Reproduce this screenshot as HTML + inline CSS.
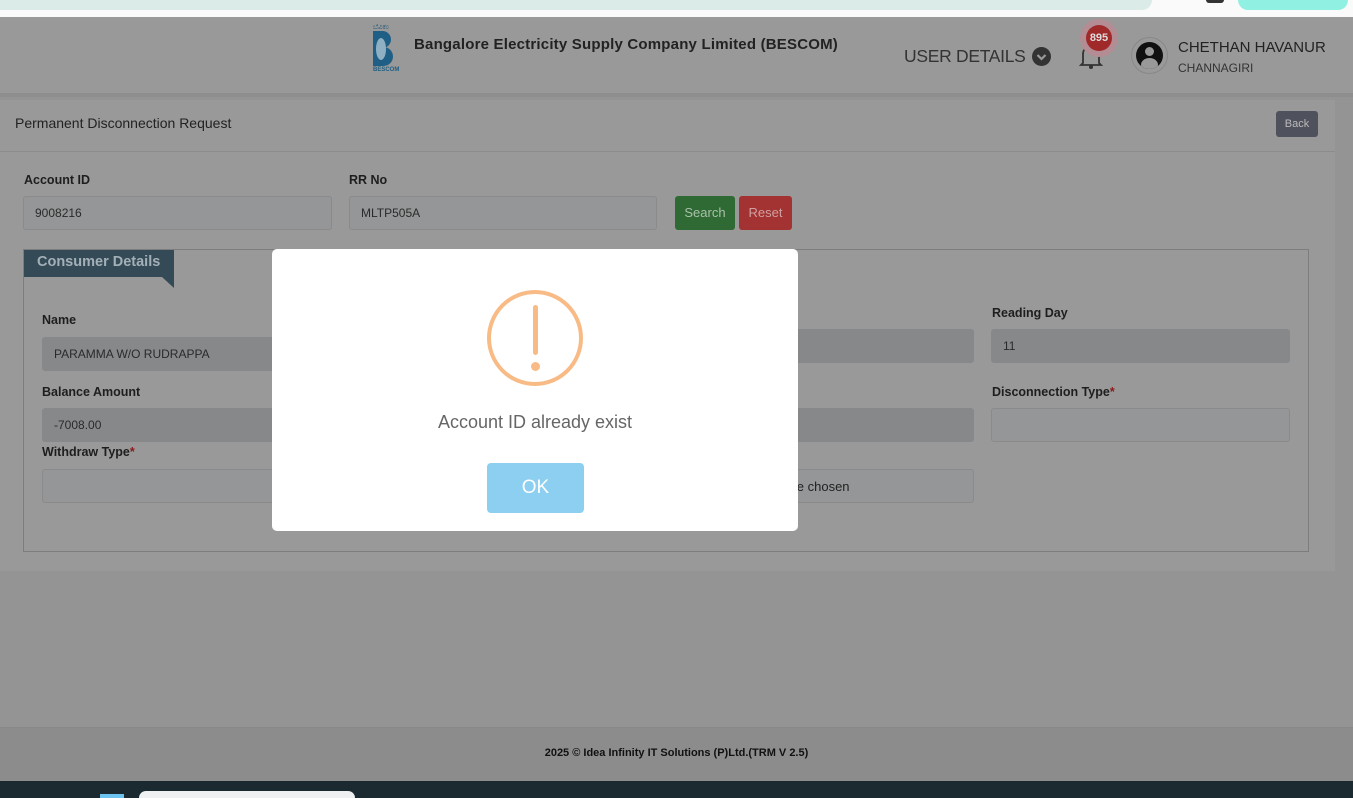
<!DOCTYPE html>
<html><head><meta charset="utf-8"><style>
*{box-sizing:border-box;margin:0;padding:0}
html,body{width:1353px;height:798px;overflow:hidden}
body{background:#949494;font-family:"Liberation Sans",sans-serif;position:relative;font-size:13px;color:#1a1a1a}
.a{position:absolute}
.lbl{position:absolute;font-size:12.5px;color:#1e1e1e;font-weight:bold}
.inp{position:absolute;border:1px solid #8a8a8a;border-radius:3px;background:#959697;font-size:12px;color:#2a2a2a;padding-left:11px;display:flex;align-items:center}
.dis{background:#87888a;border-color:#87888a}
</style></head><body>
<div class="a" style="left:0;top:0;width:1353px;height:17px;background:#fafafa"></div>
<div class="a" style="left:0;top:0;width:1152px;height:10px;background:#dbece8;border-radius:0 0 12px 0"></div>
<div class="a" style="left:1238px;top:0;width:110px;height:10px;background:#90f0e2;border-radius:0 0 10px 10px"></div>
<div class="a" style="left:1206px;top:0;width:18px;height:3px;background:#333;border-radius:0 0 9px 9px"></div>
<div class="a" style="left:0;top:17px;width:1353px;height:78px;background:#999"></div>
<div class="a" style="left:0;top:93px;width:1353px;height:4px;background:#8e8e8e"></div>
<!-- logo -->
<div class="a" style="left:373px;top:24px;font-size:7px;color:#235a78">ಬೆವಿಕಂ</div>
<div class="a" style="left:373px;top:31px;width:8px;height:35px;background:#1f5f85"></div>
<div class="a" style="left:378px;top:31px;width:13px;height:17px;background:#1f5f85;border-radius:0 9px 9px 0"></div>
<div class="a" style="left:378px;top:47px;width:15px;height:19px;background:#1f5f85;border-radius:0 10px 10px 0"></div>
<div class="a" style="left:376px;top:38px;width:10px;height:22px;border-radius:50%;background:#8fb0c2"></div>
<div class="a" style="left:373px;top:67px;font-size:6px;color:#1f5f85;font-weight:bold">BESCOM</div>
<div class="a" style="left:414px;top:36px;font-size:15px;font-weight:bold;color:#222;letter-spacing:0.2px">Bangalore Electricity Supply Company Limited (BESCOM)</div>
<div class="a" style="left:904px;top:46px;font-size:17.5px;color:#333;letter-spacing:-0.3px">USER DETAILS</div>
<div class="a" style="left:1032px;top:47px;width:19px;height:19px;border-radius:50%;background:#333"></div>
<svg class="a" style="left:1032px;top:47px" width="19" height="19"><path d="M5.5 8l4 4 4-4" fill="none" stroke="#999" stroke-width="2.2"/></svg>
<svg class="a" style="left:1078px;top:42px" width="26" height="28" viewBox="0 0 26 28"><path d="M5 21V12a8 8 0 0 1 16 0v9l2 2H3z" fill="none" stroke="#333" stroke-width="1.8"/><circle cx="13" cy="25" r="2" fill="#333"/></svg>
<div class="a" style="left:1080px;top:19px;width:38px;height:38px;border-radius:50%;background:#b48c93"></div>
<div class="a" style="left:1086px;top:25px;width:26px;height:26px;border-radius:50%;background:#a0292a;color:#ddd;font-size:11px;font-weight:bold;text-align:center;line-height:26px">895</div>
<div class="a" style="left:1131px;top:37px;width:37px;height:37px;border-radius:50%;border:1px solid #888;background:#999"></div>
<div class="a" style="left:1136px;top:42px;width:27px;height:27px;border-radius:50%;background:#111;overflow:hidden"><div style="position:absolute;left:9px;top:5px;width:9px;height:9px;border-radius:50%;background:#999"></div><div style="position:absolute;left:5px;top:16px;width:17px;height:14px;border-radius:50%;background:#999"></div></div>
<div class="a" style="left:1178px;top:39px;font-size:15px;color:#222">CHETHAN HAVANUR</div>
<div class="a" style="left:1178px;top:61px;font-size:12px;color:#333">CHANNAGIRI</div>
<!-- card -->
<div class="a" style="left:0;top:100px;width:1335px;height:471px;background:#999"></div>
<div class="a" style="left:0;top:151px;width:1335px;height:1px;background:#8c8c8c"></div>
<div class="a" style="left:15px;top:115px;font-size:14px;color:#222">Permanent Disconnection Request</div>
<div class="a" style="left:1276px;top:111px;width:42px;height:26px;background:#4f525c;border-radius:3px;color:#bbb;font-size:11px;text-align:center;line-height:26px">Back</div>
<div class="lbl" style="left:24px;top:173px">Account ID</div>
<div class="inp" style="left:23px;top:196px;width:309px;height:34px">9008216</div>
<div class="lbl" style="left:349px;top:173px">RR No</div>
<div class="inp" style="left:349px;top:196px;width:308px;height:34px">MLTP505A</div>
<div class="a" style="left:675px;top:196px;width:60px;height:34px;background:#2f6a34;border-radius:3px;color:#aac0aa;font-size:13px;text-align:center;line-height:34px">Search</div>
<div class="a" style="left:739px;top:196px;width:53px;height:34px;background:#a33232;border-radius:3px;color:#d0a0a0;font-size:13px;text-align:center;line-height:34px">Reset</div>
<div class="a" style="left:23px;top:249px;width:1286px;height:303px;border:1px solid #7d7d7d"></div>
<div class="a" style="left:24px;top:250px;width:150px;height:27px;background:#354a57;color:#a4b0b8;font-size:14.5px;font-weight:bold;padding:4px 0 0 13px">Consumer Details</div>
<div class="a" style="left:162px;top:277px;width:0;height:0;border-top:11px solid #354a57;border-left:12px solid transparent"></div>
<div class="lbl" style="left:42px;top:313px">Name</div>
<div class="inp dis" style="left:42px;top:337px;width:240px;height:34px">PARAMMA W/O RUDRAPPA</div>
<div class="lbl" style="left:42px;top:385px">Balance Amount</div>
<div class="inp dis" style="left:42px;top:408px;width:240px;height:34px">-7008.00</div>
<div class="lbl" style="left:42px;top:445px">Withdraw Type<span style="color:#8b1a1a">*</span></div>
<div class="inp" style="left:42px;top:469px;width:240px;height:34px"></div>
<div class="inp dis" style="left:790px;top:329px;width:184px;height:34px"></div>
<div class="lbl" style="left:992px;top:306px">Reading Day</div>
<div class="inp dis" style="left:991px;top:329px;width:299px;height:34px">11</div>
<div class="inp dis" style="left:790px;top:408px;width:184px;height:34px"></div>
<div class="lbl" style="left:992px;top:385px">Disconnection Type<span style="color:#8b1a1a">*</span></div>
<div class="inp" style="left:991px;top:408px;width:299px;height:34px"></div>
<div class="inp" style="left:790px;top:469px;width:184px;height:34px;padding-left:0;font-size:13px;color:#222">ile chosen</div>
<!-- footer -->
<div class="a" style="left:0;top:727px;width:1353px;height:54px;background:#8c8c8c;border-top:1px solid #888"></div>
<div class="a" style="left:0;top:747px;width:1353px;text-align:center;font-size:11px;font-weight:bold;color:#111">2025 © Idea Infinity IT Solutions (P)Ltd.(TRM V 2.5)</div>
<div class="a" style="left:0;top:781px;width:1353px;height:17px;background:#1b2a31"></div>
<div class="a" style="left:139px;top:791px;width:216px;height:7px;background:#eef0f1;border-radius:8px 8px 0 0"></div>
<div class="a" style="left:100px;top:794px;width:24px;height:4px;background:#6cc3ef"></div>
<!-- modal -->
<div class="a" style="left:272px;top:249px;width:526px;height:282px;background:#fff;border-radius:5px"></div>
<div class="a" style="left:487px;top:290px;width:96px;height:96px;border-radius:50%;border:4px solid #f8bb86"></div>
<div class="a" style="left:533px;top:305px;width:5px;height:50px;background:#f8bb86;border-radius:3px"></div>
<div class="a" style="left:531px;top:362px;width:9px;height:9px;background:#f8bb86;border-radius:50%"></div>
<div class="a" style="left:272px;top:412px;width:526px;text-align:center;font-size:18px;color:#666">Account ID already exist</div>
<div class="a" style="left:487px;top:463px;width:97px;height:50px;background:#8dcff0;border-radius:4px;color:#fff;font-size:19px;text-align:center;line-height:50px">OK</div>
</body></html>
